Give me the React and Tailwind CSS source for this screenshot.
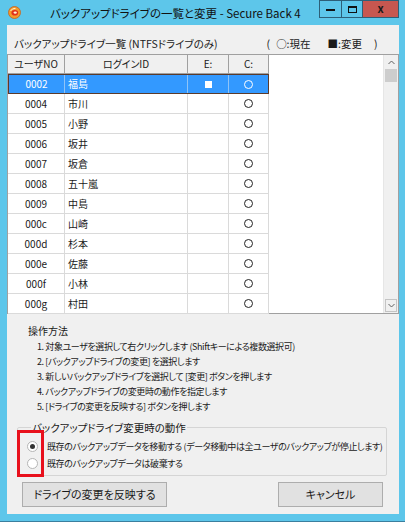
import React from 'react';

const users = [
  ['0002', '福島'],
  ['0004', '市川'],
  ['0005', '小野'],
  ['0006', '坂井'],
  ['0007', '坂倉'],
  ['0008', '五十嵐'],
  ['0009', '中島'],
  ['000c', '山崎'],
  ['000d', '杉本'],
  ['000e', '佐藤'],
  ['000f', '小林'],
  ['000g', '村田'],
];

const steps = [
  '1. 対象ユーザを選択して右クリックします (Shiftキーによる複数選択可)',
  '2. [バックアップドライブの変更] を選択します',
  '3. 新しいバックアップドライブを選択して [変更] ボタンを押します',
  '4. バックアップドライブの変更時の動作を指定します',
  '5. [ドライブの変更を反映する] ボタンを押します',
];

function AppIcon() {
  return (
    <svg width="13" height="13" viewBox="0 0 13 13">
      <circle cx="6.5" cy="6.5" r="6" fill="#f39a2b" stroke="#c8601a" strokeWidth="0.8" />
      <ellipse cx="6.8" cy="6.8" rx="3.4" ry="2.8" fill="#e0301e" />
      <ellipse cx="7.2" cy="6.6" rx="1.6" ry="1.2" fill="#fff3d0" />
      <path d="M2.5 5 Q4 2.2 7.5 2.4" stroke="#fff6dc" strokeWidth="1" fill="none" />
    </svg>
  );
}

function Radio({ checked }) {
  return (
    <span className="w-[11px] h-[11px] rounded-full border border-[#b5b5b5] bg-white flex items-center justify-center shrink-0">
      {checked && <span className="w-[5px] h-[5px] rounded-full bg-[#333]" />}
    </span>
  );
}

export default function App() {
  return (
    <div className="w-[405px] h-[522px] bg-[#5dc6ea] flex flex-col border-b border-[#3b7f9e] font-['Noto_Sans_CJK_JP','Noto_Sans',sans-serif] [font-feature-settings:'palt'] text-[#1a1a1a] overflow-hidden">
      {/* Title bar */}
      <div className="h-[25px] flex items-start shrink-0">
        <div className="pl-[8px] pt-[6px]">
          <AppIcon />
        </div>
        <div className="pl-[29px] pt-[4px] text-[11.5px] leading-[18px] text-[#111]">
          バックアップドライブの一覧と変更 - Secure Back 4
        </div>
        <div className="ml-auto mr-[6px] flex h-[18px]">
          <div className="w-[23px] border border-[#2d5f78] bg-[#5dc6ea] flex items-center justify-center">
            <span className="w-[9px] h-[2px] bg-[#111] mt-[2px]" />
          </div>
          <div className="w-[21px] border border-l-0 border-[#2d5f78] bg-[#5dc6ea] flex items-center justify-center">
            <span className="w-[9px] h-[7px] border border-t-2 border-[#111]" />
          </div>
          <div className="w-[36px] border border-l-0 border-[#2d5f78] bg-[#c75750] flex items-center justify-center text-[11px] font-bold leading-none text-[#1b1b1b] pb-[2px]">
            x
          </div>
        </div>
      </div>

      {/* Client area */}
      <div className="ml-[7px] mr-[6px] h-[489px] bg-[#f0f0f0] flex flex-col">
        <div className="h-[29px] pt-[11px] pl-[7px] flex text-[10.5px] leading-[16px] whitespace-nowrap">
          <span>バックアップドライブ一覧 (NTFSドライブのみ)</span>
          <span className="ml-[49px]">(</span>
          <span className="ml-[6px]">○:現在</span>
          <span className="ml-[17px]">■:変更</span>
          <span className="ml-[12px]">)</span>
        </div>

        {/* Grid */}
        <div className="h-[260px] border border-[#a0a0a0] bg-white flex text-[10px]">
          <div className="w-[261px] flex flex-col">
            <div className="h-[19px] flex bg-[#f0f0f0] border-b border-[#a0a0a0] leading-[18px]">
              <div className="w-[57px] border-r border-[#a0a0a0] text-center">ユーザNO</div>
              <div className="w-[123px] border-r border-[#a0a0a0] text-center">ログインID</div>
              <div className="w-[41px] border-r border-[#a0a0a0] text-center">E:</div>
              <div className="w-[40px] border-r border-[#a0a0a0] text-center">C:</div>
            </div>
            {users.map(([no, name], i) => {
              const sel = i === 0;
              return (
                <div
                  key={no}
                  className={
                    sel
                      ? 'h-[20px] flex bg-[#3399ff] text-white border border-[#5a3b2c] leading-[18px]'
                      : 'h-[20px] flex border-b border-[#dadada] leading-[19px]'
                  }
                >
                  <div className={sel ? 'w-[56px] border-r border-[#8fc4f7] text-center' : 'w-[57px] border-r border-[#dadada] text-center'}>
                    {no}
                  </div>
                  <div className={sel ? 'w-[123px] border-r border-[#8fc4f7] pl-[3px]' : 'w-[123px] border-r border-[#dadada] pl-[3px]'}>
                    {name}
                  </div>
                  <div className={sel ? 'w-[41px] border-r border-[#8fc4f7] flex items-center justify-center' : 'w-[41px] border-r border-[#dadada] flex items-center justify-center'}>
                    {sel && <span className="w-[7px] h-[7px] bg-white" />}
                  </div>
                  <div className={sel ? 'w-[39px] flex items-center justify-center' : 'w-[40px] border-r border-[#dadada] flex items-center justify-center'}>
                    <span className={sel ? 'w-[9px] h-[9px] rounded-full border border-white' : 'w-[9px] h-[9px] rounded-full border border-[#222]'} />
                  </div>
                </div>
              );
            })}
          </div>
          <div className="flex-1" />
          {/* Scrollbar */}
          <div className="w-[15px] bg-[#f0f0f0] border-l border-[#e6e6e6] flex flex-col">
            <div className="h-[14px] flex items-center justify-center">
              <svg width="7" height="5" viewBox="0 0 7 5">
                <path d="M0.5 4 L3.5 1 L6.5 4" stroke="#606060" strokeWidth="1" fill="none" />
              </svg>
            </div>
            <div className="h-[13px] mx-[1px] bg-[#cdcdcd]" />
            <div className="flex-1" />
            <div className="h-[13px] mx-[1px] mb-[1px] border border-[#c4c4c4] flex items-center justify-center">
              <svg width="7" height="5" viewBox="0 0 7 5">
                <path d="M0.5 1 L3.5 4 L6.5 1" stroke="#606060" strokeWidth="1" fill="none" />
              </svg>
            </div>
          </div>
        </div>

        {/* Instructions */}
        <div className="mt-[9px] pl-[21px] text-[10px] leading-[16px]">操作方法</div>
        <div className="pl-[30px] text-[9px] tracking-[-0.4px] leading-[15px] whitespace-nowrap">
          {steps.map((s) => (
            <div key={s}>{s}</div>
          ))}
        </div>

        {/* Group box */}
        <div className="relative mt-[6px] ml-[10px] w-[369px]">
          <fieldset className="border border-[#d5d5d5] rounded-[2px] pl-[9px] pr-[4px] pt-[3px] pb-[3px]">
            <legend className="ml-[4px] px-[1px] text-[10.5px] leading-[15px]">バックアップドライブ変更時の動作</legend>
            <label className="h-[17px] flex items-center gap-[9px] text-[9px] tracking-[-0.4px] whitespace-nowrap">
              <Radio checked />
              <span>既存のバックアップデータを移動する (データ移動中は全ユーザのバックアップが停止します)</span>
            </label>
            <label className="h-[17px] flex items-center gap-[9px] text-[9px] tracking-[-0.4px] whitespace-nowrap">
              <Radio />
              <span>既存のバックアップデータは破棄する</span>
            </label>
          </fieldset>
          <div className="absolute left-0 top-[10px] w-[27px] h-[47px] border-[3px] border-[#e8101c]" />
        </div>

        {/* Buttons */}
        <div className="mt-[6px] pl-[15px] pr-[16px] flex justify-between text-[11px]">
          <button className="w-[145px] h-[25px] border border-[#adadad] bg-[#e1e1e1] leading-none">
            ドライブの変更を反映する
          </button>
          <button className="w-[105px] h-[25px] border border-[#adadad] bg-[#e1e1e1] leading-none">
            キャンセル
          </button>
        </div>
      </div>
    </div>
  );
}
